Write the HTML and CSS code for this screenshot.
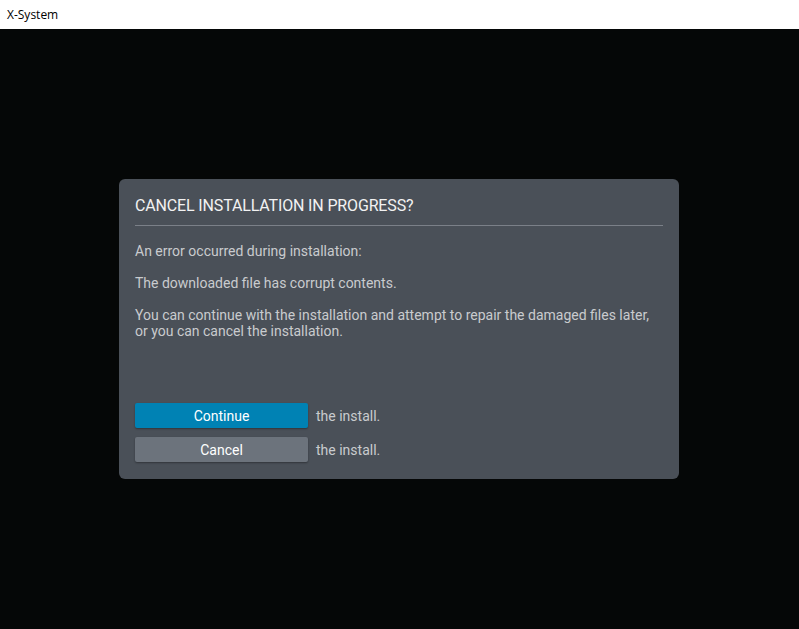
FILE: index.html
```html
<!DOCTYPE html>
<html>
<head>
<meta charset="utf-8">
<link rel="stylesheet" href="styles.css">
</head>
<body>
<div class="titlebar">X-System</div>
<div class="stage">
  <div class="dialog">
    <div class="dialog-title">CANCEL INSTALLATION IN PROGRESS?</div>
    <div class="dialog-body">
      <p>An error occurred during installation:</p>
      <p>The downloaded file has corrupt contents.</p>
      <p>You can continue with the installation and attempt to repair the damaged files later,<br>or you can cancel the installation.</p>
    </div>
    <div class="actions">
      <div class="action-row"><button class="btn btn-primary">Continue</button><span class="hint">the install.</span></div>
      <div class="action-row"><button class="btn btn-secondary">Cancel</button><span class="hint">the install.</span></div>
    </div>
  </div>
</div>
</body>
</html>
```
FILE: styles.css
```css
html, body { margin: 0; padding: 0; height: 100%; }
body { background: #050707; display: flex; flex-direction: column; font-family: Roboto, "Noto Sans", sans-serif; }
.titlebar {
  height: 29px; background: #ffffff; color: #000;
  font-family: "Open Sans", "DejaVu Sans", sans-serif; font-size: 12px;
  line-height: 29px; padding-left: 7px; box-sizing: border-box;
}
.stage { flex: 1; display: flex; align-items: flex-start; justify-content: center; padding-top: 150px; }
.dialog {
  width: 560px; box-sizing: border-box; background: #4a5058; border-radius: 6px;
  padding: 17px 16px 17px 16px; margin-right: 1px;
}
.dialog-title {
  color: #f2f2f2; font-size: 16px; line-height: 20px; letter-spacing: -0.15px;
  padding-bottom: 9px; border-bottom: 1px solid #7b8088;
}
.dialog-body { color: #c9cbce; font-size: 14px; line-height: 16px; padding-top: 17px; }
.dialog-body p { margin: 0 0 16px 0; }
.dialog-body p:last-child { margin-bottom: 0; }
.actions { margin-top: 64px; display: flex; flex-direction: column; gap: 9px; }
.action-row { display: flex; align-items: center; gap: 8px; }
.btn {
  width: 173px; height: 25px; border: none; border-radius: 2px; color: #ffffff;
  font-family: Roboto, sans-serif; font-size: 14px; padding: 0;
  box-shadow: 0 1px 2px rgba(0,0,0,0.35);
}
.btn-primary { background: #0082b4; }
.btn-secondary { background: #6c737c; }
.hint { color: #c9cbce; font-size: 14px; }
```
